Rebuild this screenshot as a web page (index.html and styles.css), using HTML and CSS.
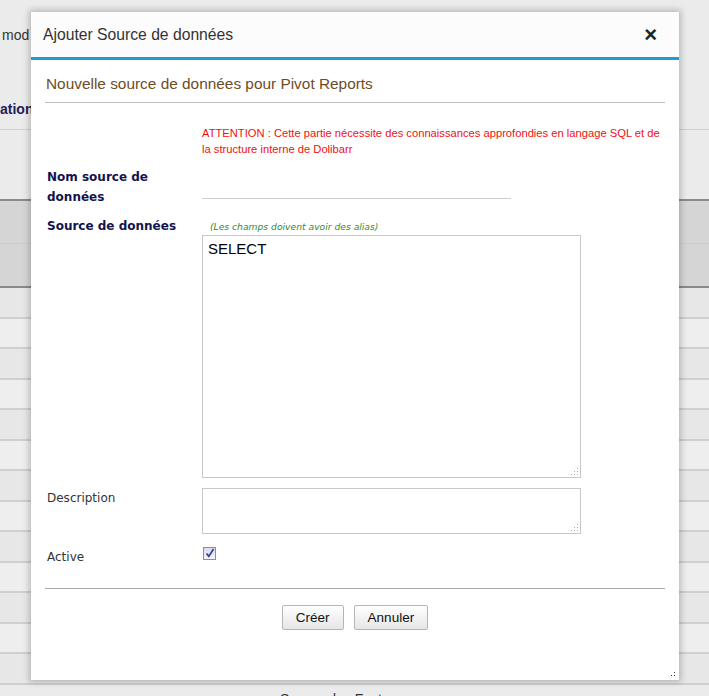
FILE: index.html
```html
<!DOCTYPE html>
<html lang="fr">
<head>
    <meta charset="UTF-8">
    <meta name="viewport" content="width=device-width, initial-scale=1.0">
    <title>Pivot Reports - Sources de données</title>
    <link rel="stylesheet" href="styles.css">
</head>
<body>
    <!-- page behind the dialog -->
    <div class="page">
        <div class="page-head">
            <div class="page-intro">mod</div>
            <div class="page-sub">ation</div>
        </div>
        <div class="page-gap"></div>
        <div class="list-header">
            <div class="list-header-row"></div>
            <div class="list-header-row"></div>
        </div>
        <div class="list-row"></div>
        <div class="list-row odd"></div>
        <div class="list-row"></div>
        <div class="list-row odd"></div>
        <div class="list-row"></div>
        <div class="list-row odd"></div>
        <div class="list-row"></div>
        <div class="list-row odd"></div>
        <div class="list-row"></div>
        <div class="list-row odd"></div>
        <div class="list-row"></div>
        <div class="list-row odd"></div>
        <div class="list-row"></div>
        <div class="page-foot">Source des Factures</div>
    </div>

    <div class="dialog">
        <div class="dialog-title">
            <span class="dialog-title-text">Ajouter Source de données</span>
            <span class="dialog-close">&times;</span>
        </div>
        <div class="dialog-body">
            <div class="section-title">Nouvelle source de données pour Pivot Reports</div>

            <div class="form">
                <div class="form-label"></div>
                <div class="warning">ATTENTION : Cette partie nécessite des connaissances approfondies en langage SQL et de la structure interne de Dolibarr</div>

                <label class="form-label required" for="ds-name">Nom source de données</label>
                <div class="form-value value-name">
                    <input type="text" id="ds-name" class="flat-input">
                </div>

                <label class="form-label required" for="ds-sql">Source de données</label>
                <div class="form-value">
                    <div class="hint">(Les champs doivent avoir des alias)</div>
                    <div class="area-wrap">
                        <textarea id="ds-sql" class="area area-sql">SELECT</textarea>
                        <span class="grip"></span>
                    </div>
                </div>

                <label class="form-label plain" for="ds-desc">Description</label>
                <div class="form-value">
                    <div class="area-wrap">
                        <textarea id="ds-desc" class="area area-desc"></textarea>
                        <span class="grip"></span>
                    </div>
                </div>

                <label class="form-label plain label-active">Active</label>
                <div class="form-value">
                    <span class="checkbox">
                        <svg width="10" height="10" viewBox="0 0 10 10">
                            <path d="M1.5 5.5 L3.8 8.3 L8.6 1" fill="none" stroke="#2a3f9a" stroke-width="1.6"/>
                        </svg>
                    </span>
                </div>
            </div>

            <div class="actions">
                <button class="btn">Créer</button>
                <button class="btn">Annuler</button>
            </div>
        </div>
        <span class="dialog-grip"></span>
    </div>
</body>
</html>
```

FILE: styles.css
```css
html, body {
    height: 100%;
    overflow: hidden;
}
body {
    margin: 0;
    font-family: "Liberation Sans", Arial, sans-serif;
    background-color: #ebebeb;
    color: #333;
}

/* background page */
.page-head {
    height: 129px;
    border-bottom: 1px solid #d2d2d2;
}
.page-intro {
    padding: 26px 0 0 2px;
    font-size: 14px;
    line-height: 18px;
}
.page-sub {
    padding-top: 56px;
    font-size: 14px;
    font-weight: bold;
    color: #20205a;
    line-height: 18px;
}
.page-gap {
    height: 69px;
    border-bottom: 2px solid #8a8a8a;
}
.list-header {
    background-color: #d5d5d5;
    border-bottom: 2px solid #8a8a8a;
}
.list-header-row {
    height: 42px;
}
.list-header-row:first-child {
    border-bottom: 1px solid #cdcdcd;
}
.list-row {
    height: 28.5px;
    background-color: #e7e7e7;
    border-bottom: 2px solid #cfcfcf;
}
.list-row.odd {
    background-color: #eeeeee;
}
.page-foot {
    font-size: 14px;
    padding: 6px 0 0 280px;
    color: #333;
}

/* dialog */
.dialog {
    position: absolute;
    left: 31px;
    top: 12px;
    width: 648px;
    height: 668px;
    background-color: #fff;
    box-shadow: 0 0 6px 2px rgba(0, 0, 0, 0.22);
    display: flex;
    flex-direction: column;
}
.dialog-title {
    height: 45px;
    background-color: #fcfcfc;
    border-bottom: 3px solid #1e9bd7;
    display: flex;
    align-items: center;
    justify-content: space-between;
    padding: 0 22px 0 12px;
}
.dialog-title-text {
    font-size: 15.7px;
    color: #333;
}
.dialog-close {
    font-size: 22px;
    font-weight: bold;
    color: #222;
    line-height: 1;
}
.dialog-body {
    padding: 0 14px;
    flex: 1;
}
.section-title {
    font-size: 15.4px;
    color: #6e4d1f;
    padding: 15px 1px 9px 1px;
    border-bottom: 1px solid #bdbdbd;
}
.form {
    display: grid;
    grid-template-columns: 157px 1fr;
    padding-top: 22px;
}
.form-label {
    padding-left: 2px;
    font-family: "DejaVu Sans", Verdana, sans-serif;
    font-size: 12px;
}
.form-label.required {
    font-weight: bold;
    color: #13134e;
    line-height: 20px;
}
.form-label.plain {
    padding-top: 3px;
    color: #333;
    font-size: 12px;
    line-height: 14px;
}
.warning {
    color: #f01010;
    font-size: 11.2px;
    line-height: 16px;
    margin-bottom: 10px;
}
.form-value {
    margin-bottom: 10px;
}
.form-value.value-name {
    margin-bottom: 17px;
}
.flat-input {
    display: block;
    box-sizing: border-box;
    width: 309px;
    height: 24px;
    margin: 8px 0 0 0;
    padding: 0;
    border: none;
    border-bottom: 1px solid #cfcfcf;
    outline: none;
}
.hint {
    font-family: "DejaVu Sans", Verdana, sans-serif;
    font-size: 9.2px;
    font-style: italic;
    color: #2f8c2f;
    padding: 4px 0 0 8px;
    margin-bottom: 1px;
    line-height: 14px;
}
.area-wrap {
    position: relative;
    width: 379px;
}
.area {
    display: block;
    box-sizing: border-box;
    width: 379px;
    border: 1px solid #c8c8c8;
    resize: none;
    font-family: "Liberation Sans", Arial, sans-serif;
    font-size: 15px;
    color: #000;
    padding: 4px 5px;
    margin: 0;
}
.area-sql {
    height: 243px;
}
.area-desc {
    height: 46px;
}
.grip {
    position: absolute;
    right: 3px;
    bottom: 3px;
    width: 8px;
    height: 8px;
    background-image: radial-gradient(circle, #aaa 0.7px, transparent 0.9px);
    background-size: 3px 3px;
    clip-path: polygon(100% 0, 100% 100%, 0 100%);
}
.form-label.label-active {
    padding-top: 6px;
}
.checkbox {
    display: block;
    box-sizing: border-box;
    width: 13px;
    height: 13px;
    margin: 3px 0 0 1px;
    border: 1px solid #8e8f8f;
    background: linear-gradient(#dcdcec, #f4f4f8);
    position: relative;
}
.checkbox svg {
    position: absolute;
    left: 1px;
    top: 0;
}
.actions {
    border-top: 1px solid #a8a8a8;
    margin-top: 18px;
    padding-top: 16px;
    display: flex;
    justify-content: center;
    gap: 10px;
}
.btn {
    height: 25px;
    padding: 0 13px;
    font-family: "Liberation Sans", Arial, sans-serif;
    font-size: 13.5px;
    color: #111;
    background: linear-gradient(#ffffff, #e6e6e6);
    border: 1px solid #b5b5b5;
    border-radius: 2px;
}
.dialog-grip {
    position: absolute;
    right: 2px;
    bottom: 2px;
    width: 10px;
    height: 10px;
    background-image: radial-gradient(circle, #333 0.8px, transparent 1px);
    background-size: 3px 3px;
    clip-path: polygon(100% 0, 100% 100%, 0 100%);
}
```
